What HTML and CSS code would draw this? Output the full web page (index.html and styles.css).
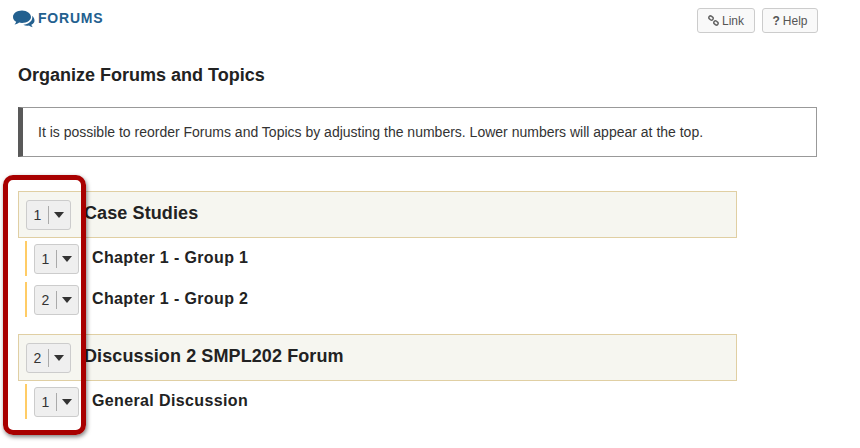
FILE: index.html
```html
<!DOCTYPE html>
<html lang="en">
<head>
    <meta charset="UTF-8">
    <title>Forums - Organize</title>
    <link rel="stylesheet" href="styles.css">
</head>
<body>
    <div class="toolbar">
        <div class="tool-title">
            <svg class="title-icon" viewBox="0 0 22 18" width="22" height="18">
                <path fill="#23608f" d="M9 0.500C4 0.500 0 3.300 0 6.900c0 2 1.200 3.700 3.200 4.900-.3 1-.9 1.900-1.700 2.700 1.800-.2 3.400-.9 4.600-1.900.9.200 1.800.3 2.900.3 5 0 9-2.800 9-6S14 .5 9 .5z"/>
                <path fill="#23608f" d="M19 5.800c.2.500.3 1.100.3 1.700 0 3.700-3.800 6.800-9 7.200 1.100.7 2.500 1.100 4 1.100.6 0 1.100 0 1.600-.2 1 .8 2.300 1.400 3.900 1.600-.7-.7-1.300-1.500-1.500-2.400 2-.9 3.200-2.300 3.200-4 0-2-.9-3.700-2.500-5z"/>
            </svg>
            <span>FORUMS</span>
        </div>
        <div class="tool-buttons">
            <a class="tool-btn" href="#">
                <svg class="btn-icon" viewBox="0 0 12 12" width="11" height="11">
                    <g fill="none" stroke="#666" stroke-width="1.600">
                        <rect x="0.800" y="1.500" width="5" height="3.600" rx="1.800" transform="rotate(40 3.300 3.300)"/>
                        <rect x="6.200" y="6.900" width="5" height="3.600" rx="1.800" transform="rotate(40 8.700 8.700)"/>
                    </g>
                </svg>
                Link
            </a>
            <a class="tool-btn tool-btn-help" href="#"><span class="help-mark">?</span> Help</a>
        </div>
    </div>

    <h1>Organize Forums and Topics</h1>

    <div class="notice">It is possible to reorder Forums and Topics by adjusting the numbers. Lower numbers will appear at the top.</div>

    <div class="forum-list">
        <div class="forum">
            <div class="forum-row">
                <div class="order"><span class="num">1</span><span class="caret"></span></div>
                <h2>Case Studies</h2>
            </div>
            <div class="topic-row">
                <div class="order"><span class="num">1</span><span class="caret"></span></div>
                <h3>Chapter 1 - Group 1</h3>
            </div>
            <div class="topic-row">
                <div class="order"><span class="num">2</span><span class="caret"></span></div>
                <h3>Chapter 1 - Group 2</h3>
            </div>
        </div>
        <div class="forum">
            <div class="forum-row">
                <div class="order"><span class="num">2</span><span class="caret"></span></div>
                <h2>Discussion 2 SMPL202 Forum</h2>
            </div>
            <div class="topic-row">
                <div class="order"><span class="num">1</span><span class="caret"></span></div>
                <h3>General Discussion</h3>
            </div>
        </div>
        <div class="highlight"></div>
    </div>
</body>
</html>
```

FILE: styles.css
```css
html, body {
    margin: 0;
    padding: 0;
}
body {
    height: 448px;
    overflow: hidden;
    background: #fff;
    color: #222;
    font-family: "Liberation Sans", Arial, sans-serif;
    padding: 8px 42px 0 18px;
    box-sizing: border-box;
}
.toolbar {
    display: flex;
    justify-content: space-between;
    height: 25px;
}
.tool-title {
    display: flex;
    align-items: flex-start;
    gap: 3px;
    margin-left: -5px;
    padding-top: 2px;
    color: #23608f;
    font-size: 14px;
    font-weight: bold;
    letter-spacing: 0.800px;
}
.tool-buttons {
    display: flex;
    gap: 7px;
}
.tool-btn {
    display: flex;
    align-items: center;
    justify-content: center;
    gap: 3px;
    box-sizing: border-box;
    height: 25px;
    padding: 0 10px;
    background: #f9f9f9;
    border: 1px solid #ccc;
    border-radius: 3px;
    color: #555;
    font-size: 12px;
    text-decoration: none;
}
.tool-btn-help {
    width: 56px;
    padding: 0;
}
.help-mark {
    font-weight: bold;
}
h1 {
    margin: 24px 0 0;
    font-size: 18px;
    line-height: 36px;
    font-weight: bold;
}
.notice {
    box-sizing: border-box;
    height: 50px;
    margin: 14px 1px 0 0;
    padding: 0 15px;
    display: flex;
    align-items: center;
    background: #fff;
    border: 1px solid #999;
    border-left: 5px solid #595959;
    color: #333;
    font-size: 14px;
}
.forum-list {
    position: relative;
    margin-top: 34px;
}
.forum {
    margin-bottom: 17px;
}
.forum-row {
    box-sizing: border-box;
    width: 719px;
    height: 47px;
    display: flex;
    align-items: center;
    gap: 13px;
    padding-left: 7px;
    background: #f6f6f0;
    border: 1px solid #e0cfa3;
}
.forum-row h2 {
    margin: 0 0 2px;
    font-size: 18px;
    font-weight: bold;
    letter-spacing: 0.100px;
}
.topic-row {
    box-sizing: border-box;
    height: 35px;
    margin: 3px 0 6px 7px;
    padding-left: 7px;
    display: flex;
    align-items: center;
    gap: 13px;
    border-left: 2px solid #fc6;
}
.topic-row:last-child {
    margin-bottom: 0;
}
.topic-row h3 {
    margin: 0 0 2px;
    font-size: 16px;
    font-weight: bold;
    letter-spacing: 0.370px;
}
.order {
    box-sizing: border-box;
    width: 45px;
    height: 30px;
    display: flex;
    align-items: center;
    background: #efefef;
    border: 1px solid #ccc;
    border-radius: 3px;
    color: #333;
    font-size: 14px;
}
.num {
    width: 21px;
    height: 18px;
    line-height: 18px;
    text-align: center;
    border-right: 1px solid #aaa;
}
.caret {
    width: 0;
    height: 0;
    margin-left: 5px;
    border-left: 5px solid transparent;
    border-right: 5px solid transparent;
    border-top: 6px solid #333;
}
.highlight {
    position: absolute;
    left: -15px;
    top: -16px;
    width: 83px;
    height: 260px;
    box-sizing: border-box;
    border: 5px solid #a80000;
    border-radius: 10px;
    box-shadow: 1px 2px 4px rgba(0, 0, 0, 0.500);
}
```
